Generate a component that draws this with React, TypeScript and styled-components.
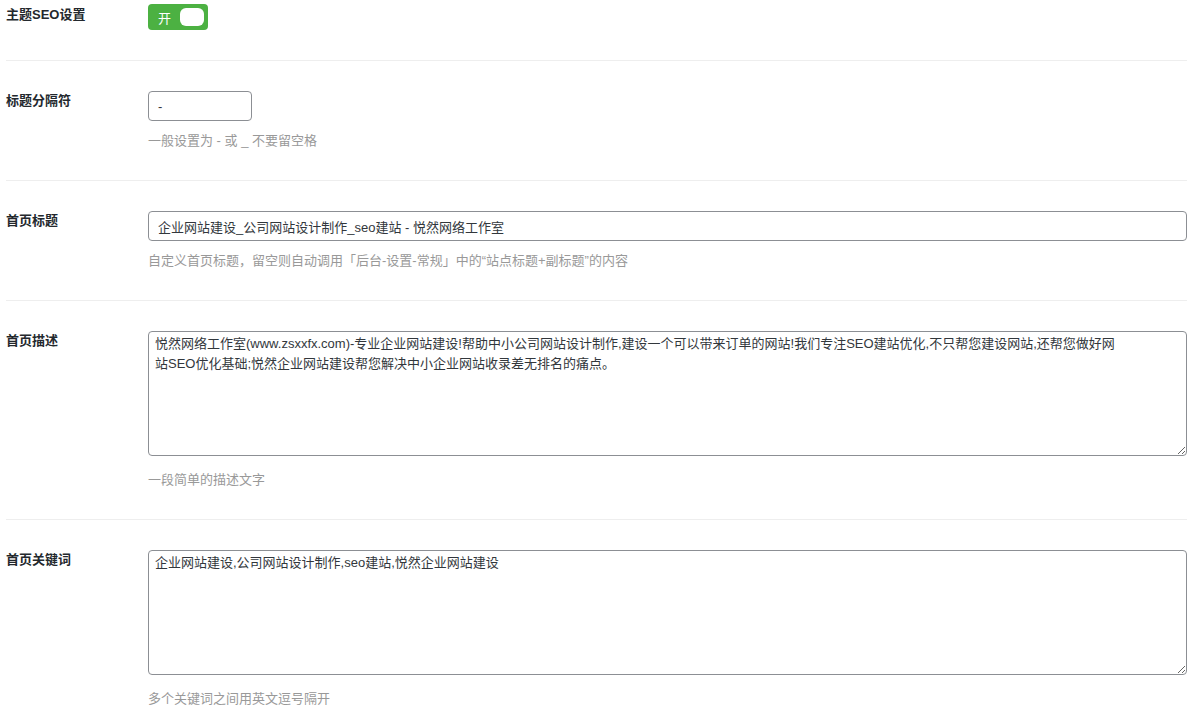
import { FC } from "react";
import styled, { createGlobalStyle } from "styled-components";

const GlobalStyle = createGlobalStyle`
  html, body {
    margin: 0;
    padding: 0;
    background: #ffffff;
  }
  body {
    font-family: "Liberation Sans", "Noto Sans CJK SC", sans-serif;
    font-size: 13px;
    color: #23282d;
  }
`;

const Page = styled.div`
  width: 1197px;
  padding: 0 10px 0 6px;
  box-sizing: border-box;
`;

const Row = styled.div<{ $first?: boolean }>`
  display: grid;
  grid-template-columns: 142px 1fr;
  padding: ${(p) => (p.$first ? "4px 0 30px" : "30px 0 29px")};
  border-top: ${(p) => (p.$first ? "none" : "1px solid #eeeeee")};
`;

const Label = styled.div<{ $offset: number }>`
  font-weight: 700;
  font-size: 13px;
  line-height: 20px;
  padding-top: ${(p) => p.$offset}px;
  color: #23282d;
`;

const Field = styled.div`
  display: flex;
  flex-direction: column;
  gap: 10px;
`;

const Toggle = styled.div`
  width: 60px;
  height: 26px;
  border-radius: 4px;
  background: #4cb142;
  display: flex;
  align-items: center;
  justify-content: space-between;
  padding: 0 4px 0 10px;
  box-sizing: border-box;
  color: #ffffff;
  font-size: 13px;
`;

const Knob = styled.span`
  width: 24px;
  height: 18px;
  border-radius: 6px;
  background: #ffffff;
`;

const TextInput = styled.input<{ $width?: number }>`
  width: ${(p) => (p.$width ? `${p.$width}px` : "100%")};
  height: 30px;
  box-sizing: border-box;
  border: 1px solid #8c8f94;
  border-radius: 4px;
  padding: 0 9px;
  font-family: "Liberation Sans", "Noto Sans CJK SC", sans-serif;
  font-size: 13px;
  color: #32373c;
  outline: none;
`;

const TextArea = styled.textarea<{ $padRight?: number }>`
  width: 100%;
  height: 125px;
  box-sizing: border-box;
  border: 1px solid #8c8f94;
  border-radius: 4px;
  padding: 2px ${(p) => p.$padRight ?? 6}px 2px 6px;
  font-family: "Liberation Sans", "Noto Sans CJK SC", sans-serif;
  font-size: 13px;
  line-height: 20px;
  color: #32373c;
  outline: none;
  display: block;
`;

const Hint = styled.p<{ $gap?: number }>`
  margin: ${(p) => p.$gap ?? 0}px 0 0;
  font-size: 13px;
  line-height: 20px;
  color: #999999;
`;

const description =
  "悦然网络工作室(www.zsxxfx.com)-专业企业网站建设!帮助中小公司网站设计制作,建设一个可以带来订单的网站!我们专注SEO建站优化,不只帮您建设网站,还帮您做好网站SEO优化基础;悦然企业网站建设帮您解决中小企业网站收录差无排名的痛点。";

const App: FC = () => {
  return (
    <>
      <GlobalStyle />
      <Page>
        <Row $first>
          <Label $offset={1}>主题SEO设置</Label>
          <Field>
            <Toggle>
              <span>开</span>
              <Knob />
            </Toggle>
          </Field>
        </Row>

        <Row>
          <Label $offset={0}>标题分隔符</Label>
          <Field>
            <TextInput $width={104} defaultValue="-" readOnly />
            <Hint>一般设置为 - 或 _ 不要留空格</Hint>
          </Field>
        </Row>

        <Row>
          <Label $offset={0}>首页标题</Label>
          <Field>
            <TextInput
              defaultValue="企业网站建设_公司网站设计制作_seo建站 - 悦然网络工作室"
              readOnly
            />
            <Hint>
              自定义首页标题，留空则自动调用「后台-设置-常规」中的“站点标题+副标题”的内容
            </Hint>
          </Field>
        </Row>

        <Row>
          <Label $offset={0}>首页描述</Label>
          <Field>
            <TextArea $padRight={63} defaultValue={description} readOnly />
            <Hint $gap={4}>一段简单的描述文字</Hint>
          </Field>
        </Row>

        <Row>
          <Label $offset={0}>首页关键词</Label>
          <Field>
            <TextArea
              defaultValue="企业网站建设,公司网站设计制作,seo建站,悦然企业网站建设"
              readOnly
            />
            <Hint $gap={4}>多个关键词之间用英文逗号隔开</Hint>
          </Field>
        </Row>
      </Page>
    </>
  );
};

export default App;
